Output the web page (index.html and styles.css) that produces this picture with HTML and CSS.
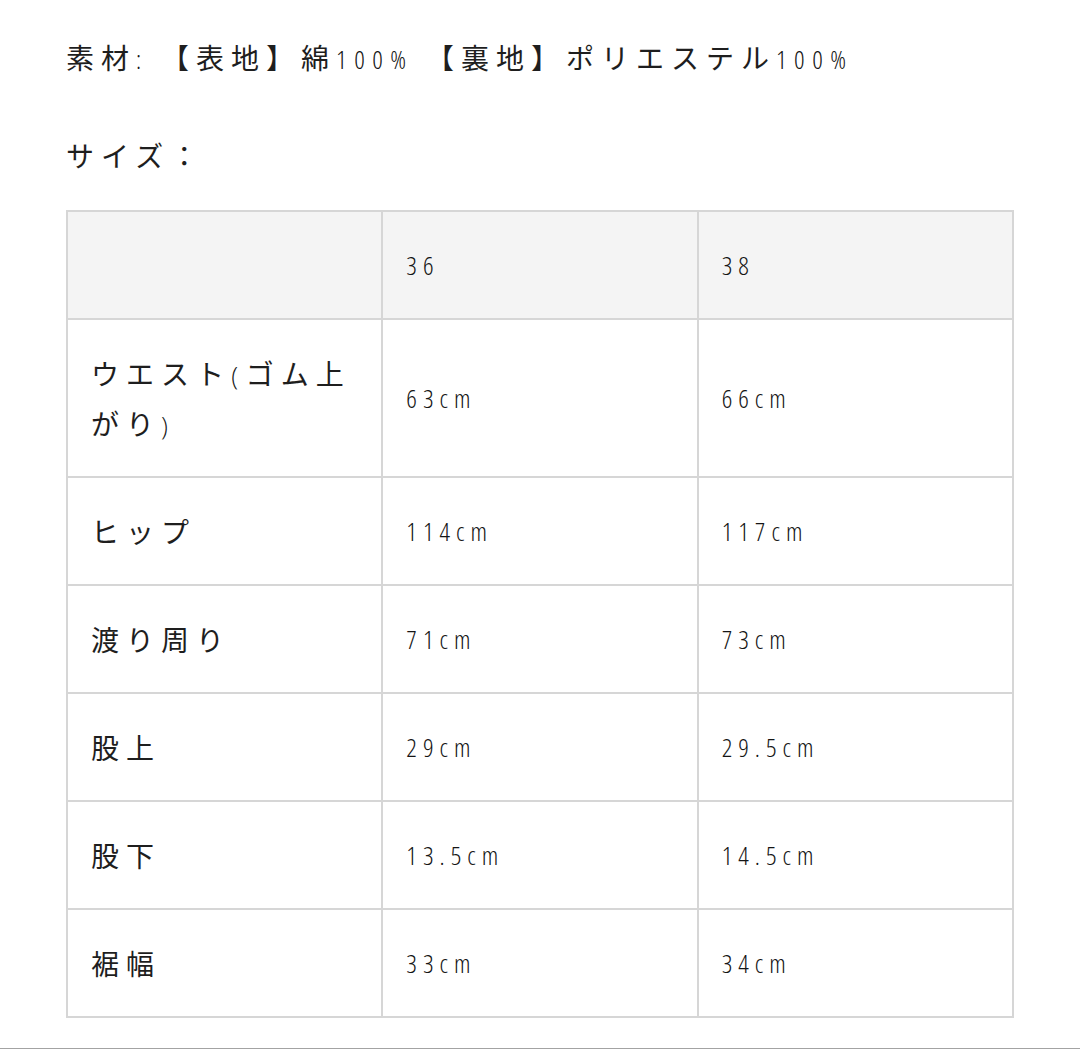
FILE: index.html
```html
<!DOCTYPE html>
<html lang="ja"><head><meta charset="utf-8"><link rel="stylesheet" href="styles.css"></head>
<body>
<main class="content">
  <p class="line">素材<span class="num">: </span>【表地】綿<span class="num">100% </span>【裏地】ポリエステル<span class="num">100%</span></p>
  <p class="line">サイズ：</p>
  <table class="size-table">
    <thead>
      <tr><th></th><th class="num">36</th><th class="num">38</th></tr>
    </thead>
    <tbody>
      <tr><td>ウエスト<span class="num">(</span>ゴム上がり<span class="num">)</span></td><td class="num">63cm</td><td class="num">66cm</td></tr>
      <tr><td>ヒップ</td><td class="num">114cm</td><td class="num">117cm</td></tr>
      <tr><td>渡り周り</td><td class="num">71cm</td><td class="num">73cm</td></tr>
      <tr><td>股上</td><td class="num">29cm</td><td class="num">29.5cm</td></tr>
      <tr><td>股下</td><td class="num">13.5cm</td><td class="num">14.5cm</td></tr>
      <tr><td>裾幅</td><td class="num">33cm</td><td class="num">34cm</td></tr>
    </tbody>
  </table>
</main>
<div class="rule"></div>
</body></html>
```
FILE: styles.css
```css
html,body{margin:0;padding:0;background:#fff}
body{
  font-family:"Noto Sans CJK JP",sans-serif;
  font-size:28px;
  color:#1e1e1e;
  letter-spacing:7px;
}
.content{padding:32px 66px 0 66px}
.line{margin:0 0 48px 0;line-height:50px}
.line + .line{margin-bottom:30px}
.num{
  font-family:"Open Sans","Noto Sans CJK JP",sans-serif;
  font-size:26px;
  font-stretch:75%;
  font-weight:300;
  letter-spacing:7.5px;
  color:#151515;
}
span.num{line-height:1}
.size-table{
  width:948px;
  border-collapse:collapse;
  table-layout:fixed;
}
.size-table th,.size-table td{
  border:2px solid #d6d6d6;
  padding:28px 20px 28px 23px;
  line-height:50px;
  text-align:left;
  font-weight:400;
  vertical-align:middle;
}
.size-table th.num,.size-table td.num{letter-spacing:6px;font-weight:300}
.size-table thead th{background:#f4f4f4}
.rule{margin-top:30px;border-top:1px solid #a3a3a3}
```
